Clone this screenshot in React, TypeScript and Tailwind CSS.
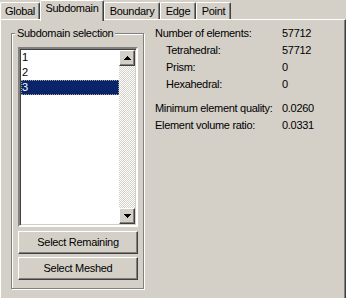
import React from 'react';

const raised =
  'border border-t-white border-l-white border-r-[#404040] border-b-[#404040] shadow-[inset_-1px_-1px_0_#808080]';

function Arrow({ up }: { up?: boolean }) {
  return (
    <svg width="7" height="4" viewBox="0 0 7 4" className="block">
      <path d={up ? 'M3 0h1v1h1v1h1v1h1v1H0V3h1V2h1V1h1z' : 'M0 0h7v1H6v1H5v1H4v1H3V3H2V2H1V1H0z'} fill="#000" />
    </svg>
  );
}

function ScrollButton({ up }: { up?: boolean }) {
  return (
    <div className={`w-[16px] h-[16px] bg-[#d4d0c8] flex items-center justify-center ${raised}`}>
      <Arrow up={up} />
    </div>
  );
}

function Tab({ label, w, active }: { label: string; w: string; active?: boolean }) {
  if (active)
    return (
      <div className={`${w} h-[21px] -mb-[2px] relative z-10 bg-[#d4d0c8] border-l border-t border-r border-l-white border-t-white border-r-[#404040] shadow-[inset_-1px_0_0_#808080] rounded-t-[2px] flex justify-center pt-[1px] leading-[13px]`}>
        {label}
      </div>
    );
  return (
    <div className={`${w} h-[17px] border-l border-t border-r border-l-white border-t-white border-r-[#404040] shadow-[inset_-1px_0_0_#808080] rounded-t-[2px] flex justify-center pt-[2px] leading-[13px]`}>
      {label}
    </div>
  );
}

const items = ['1', '2', '3'];

export default function App() {
  return (
    <div className="w-[346px] h-[298px] overflow-hidden bg-[#d4d0c8] text-black text-[11px] tracking-[-0.3px] font-['Liberation_Sans',Arial,sans-serif] flex flex-col">
      <div className="h-[19px] flex items-end shrink-0">
        <Tab label="Global" w="w-[40px]" />
        <Tab label="Subdomain" w="w-[64px]" active />
        <Tab label="Boundary" w="w-[56px]" />
        <Tab label="Edge" w="w-[36px]" />
        <Tab label="Point" w="w-[35px]" />
      </div>

      <div className="flex-1 border-l border-t border-r border-l-white border-t-white border-r-[#404040] shadow-[inset_-1px_0_0_#808080] flex items-start pl-[10px] pt-[7px]">
        <fieldset className="w-[133px] h-[262px] border border-[#808080] shadow-[inset_1px_1px_0_#fff,1px_1px_0_#fff] pl-[6px] pr-[5px] shrink-0">
          <legend className="ml-[-3px] px-[2px] leading-[13px] bg-[#d4d0c8]">Subdomain selection</legend>
          <div className="mt-[7px] w-[120px] h-[180px] bg-white border-2 border-t-[#808080] border-l-[#808080] border-b-white border-r-white shadow-[inset_1px_1px_0_#404040,inset_-1px_-1px_0_#d4d0c8] flex">
            <div className="flex-1 pt-[1px] pl-[1px]">
              {items.map((it, i) => (
                <div
                  key={it}
                  className={`h-[15px] leading-[15px] pl-[1px] ${i === 2 ? 'bg-[#0a246a] text-white outline outline-1 outline-dotted outline-[#a0a0a0] -outline-offset-1' : ''}`}
                >
                  {it}
                </div>
              ))}
            </div>
            <div className="w-[16px] mt-[1px] mb-[1px] mr-[1px] flex flex-col bg-[repeating-conic-gradient(#fff_0_25%,#d4d0c8_0_50%)] bg-[length:2px_2px]">
              <ScrollButton up />
              <div className="flex-1" />
              <ScrollButton />
            </div>
          </div>
          <div className="mt-[4px] flex flex-col gap-[3px]">
            <button className={`w-[120px] h-[23px] bg-[#d4d0c8] ${raised}`}>Select Remaining</button>
            <button className={`w-[120px] h-[23px] bg-[#d4d0c8] ${raised}`}>Select Meshed</button>
          </div>
        </fieldset>

        <div className="ml-[11px] -mt-[2px] grid grid-cols-[127px_auto] content-start leading-[17px]">
          <div>Number of elements:</div>
          <div>57712</div>
          <div className="pl-[11px]">Tetrahedral:</div>
          <div>57712</div>
          <div className="pl-[11px]">Prism:</div>
          <div>0</div>
          <div className="pl-[11px]">Hexahedral:</div>
          <div>0</div>
          <div className="mt-[7px]">Minimum element quality:</div>
          <div className="mt-[7px]">0.0260</div>
          <div>Element volume ratio:</div>
          <div>0.0331</div>
        </div>
      </div>
    </div>
  );
}
